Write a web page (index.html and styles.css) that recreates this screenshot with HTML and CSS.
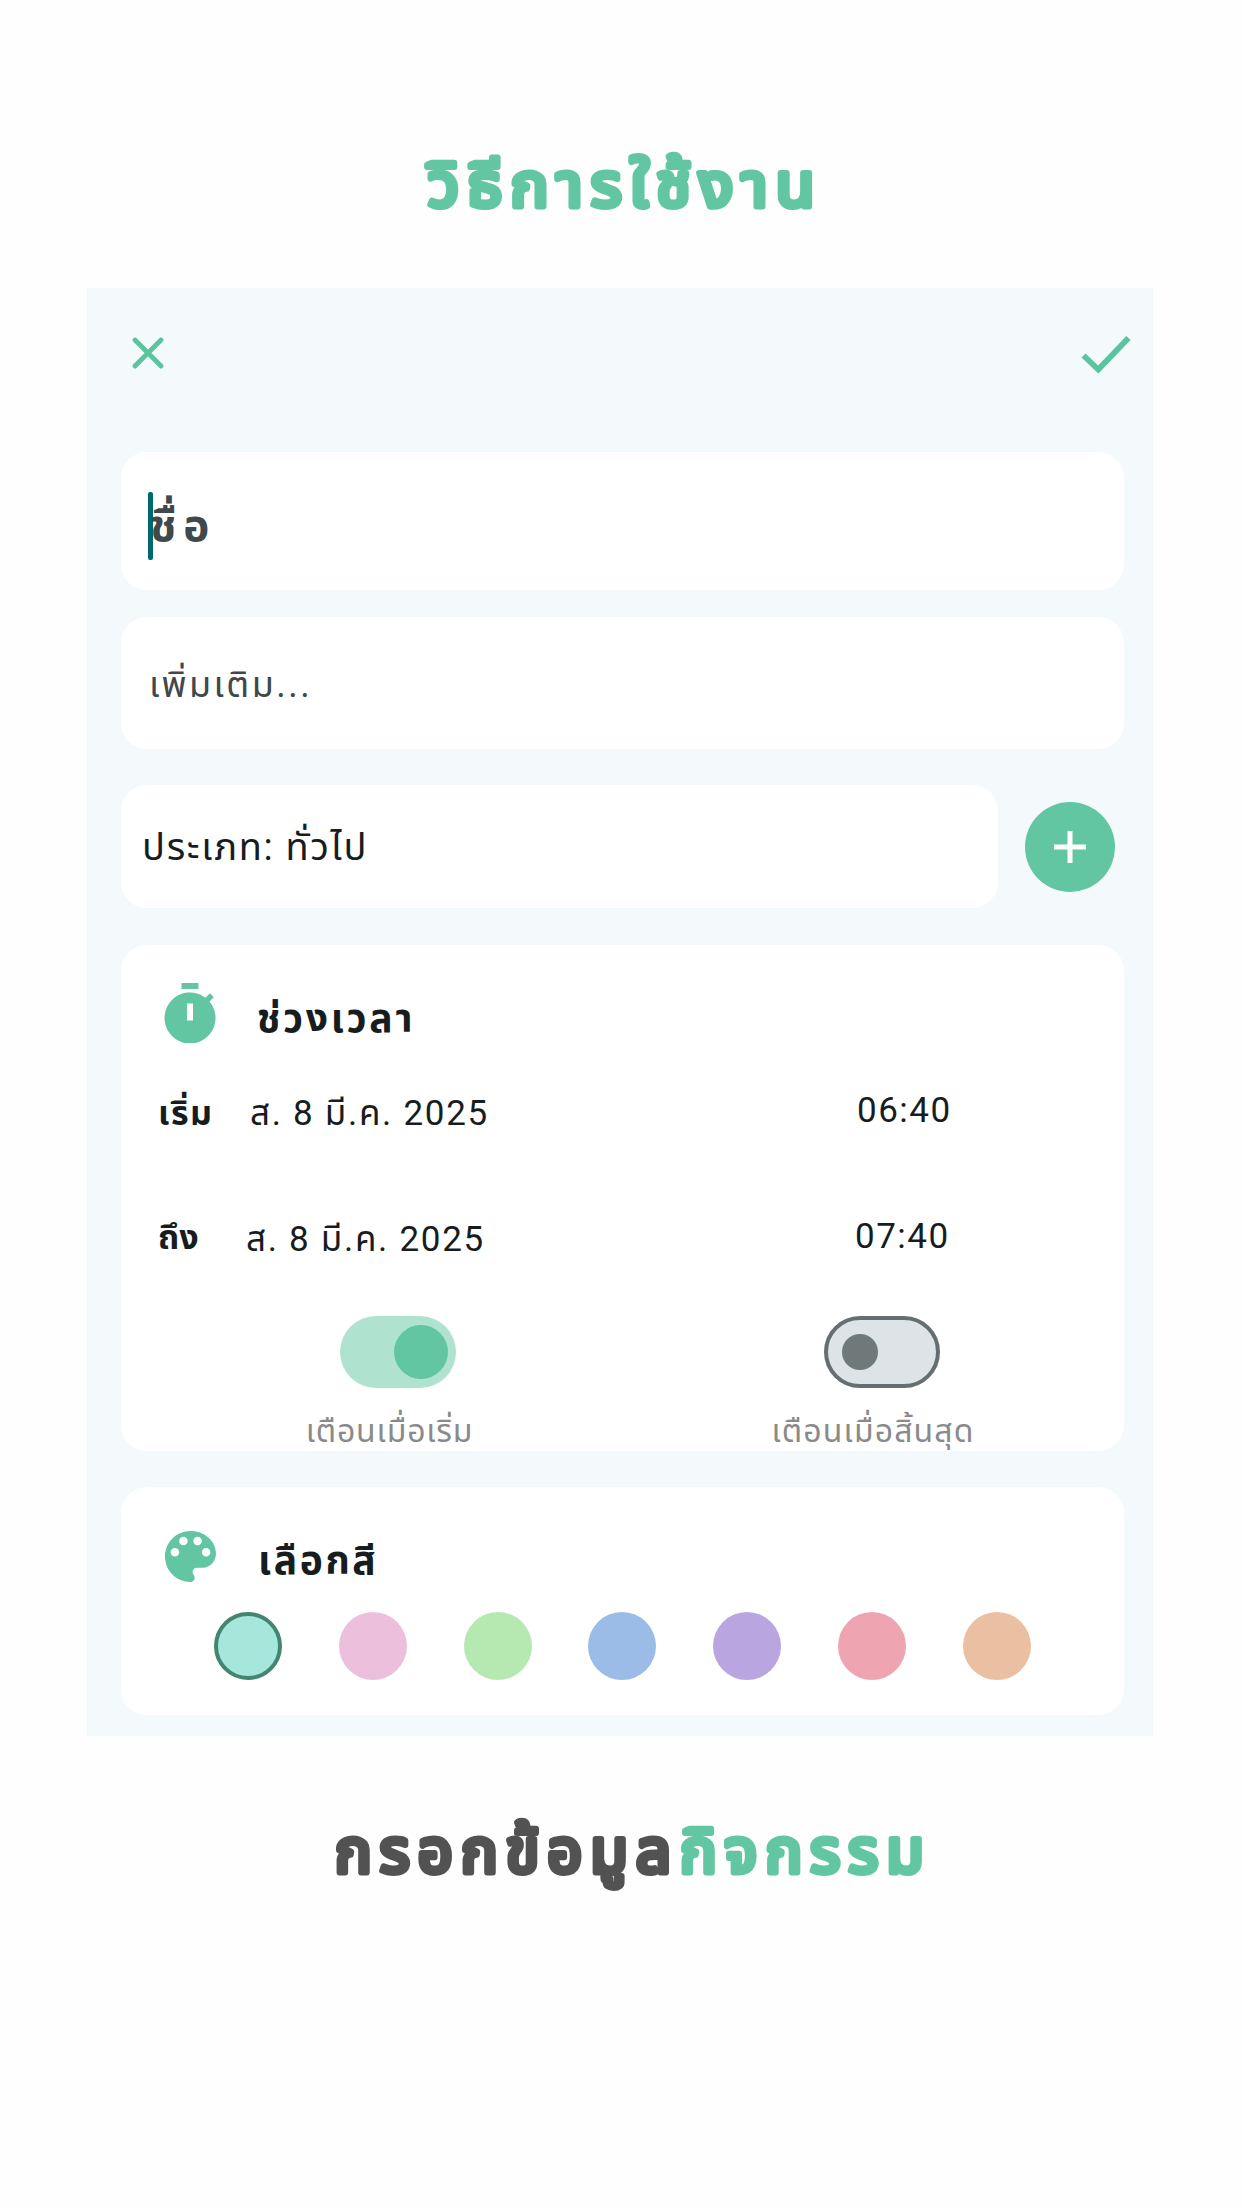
FILE: index.html
```html
<!DOCTYPE html>
<html lang="th">
<head>
<meta charset="utf-8">
<title>วิธีการใช้งาน</title>
<link rel="stylesheet" href="styles.css">
</head>
<body>
<main class="page">
  <h1 class="headline"><svg class="display" viewBox="0 0 1242 288"><text class="green-text" x="428" y="206" textLength="395" lengthAdjust="spacingAndGlyphs">วิธีการใช้งาน</text></svg></h1>

  <section class="panel">
    <header class="toolbar">
      <svg class="icon-close" viewBox="0 0 32 32"><path d="M3 3 29 29M29 3 3 29"/></svg>
      <svg class="icon-check" viewBox="0 0 50 38"><path d="M2.5 20.500 17.300 34.500 47.500 3"/></svg>
    </header>

    <div class="card field field-name"><span class="caret"></span><span class="t name-text">ชื่อ</span></div>
    <div class="card field field-more"><span class="t more-text">เพิ่มเติม...</span></div>

    <div class="type-row">
      <div class="card field field-type"><span class="t type-text">ประเภท: ทั่วไป</span></div>
      <button class="add" aria-label="เพิ่ม">
        <svg viewBox="0 0 32 32"><path d="M16 0V32M0 16H32"/></svg>
      </button>
    </div>

    <div class="card time-card">
      <div class="card-head time-head">
        <svg class="icon-timer" viewBox="0 0 52 60">
          <path d="M17.500 0h17v6h-17z"/>
          <path fill-rule="evenodd" d="M41.500 14.700 46 10.300 49.800 14.300 45.500 18.500A25.500 25.500 0 1 1 41.500 14.700ZM23 20.500V37.500H29V20.500Z"/>
        </svg>
        <h2 class="t time-title">ช่วงเวลา</h2>
      </div>
      <div class="time-row row-start">
        <span class="t label">เริ่ม</span><span class="t date">ส. 8 มี.ค. 2025</span><span class="t clock">06:40</span>
      </div>
      <div class="time-row row-end">
        <span class="t label">ถึง</span><span class="t date">ส. 8 มี.ค. 2025</span><span class="t clock">07:40</span>
      </div>
      <div class="alerts">
        <div class="alert alert-start"><span class="switch on"></span><span class="t hint">เตือนเมื่อเริ่ม</span></div>
        <div class="alert alert-end"><span class="switch off"></span><span class="t hint">เตือนเมื่อสิ้นสุด</span></div>
      </div>
    </div>

    <div class="card color-card">
      <div class="card-head color-head">
        <svg class="icon-palette" viewBox="3 3 18 18"><path d="M12 3c-4.970 0-9 4.030-9 9s4.030 9 9 9c.83 0 1.500-.67 1.500-1.500 0-.39-.15-.74-.39-1.010-.23-.26-.38-.61-.38-.99 0-.83.67-1.500 1.500-1.500H16c2.760 0 5-2.240 5-5 0-4.420-4.030-8-9-8zm-5.500 9c-.83 0-1.500-.67-1.500-1.500S5.670 9 6.500 9 8 9.670 8 10.500 7.330 12 6.500 12zm3-4C8.670 8 8 7.330 8 6.500S8.670 5 9.500 5s1.500.67 1.500 1.500S10.330 8 9.500 8zm5 0c-.83 0-1.500-.67-1.500-1.500S13.670 5 14.500 5s1.500.67 1.500 1.500S15.330 8 14.500 8zm3 4c-.83 0-1.500-.67-1.500-1.500S16.670 9 17.500 9s1.500.67 1.500 1.500-.67 1.500-1.500 1.500z"/></svg>
        <h2 class="t color-title">เลือกสี</h2>
      </div>
      <div class="swatches">
        <span class="swatch mint selected"></span><span class="swatch pink"></span><span class="swatch green"></span><span class="swatch blue"></span><span class="swatch purple"></span><span class="swatch red"></span><span class="swatch orange"></span>
      </div>
    </div>
  </section>

  <p class="footline"><svg class="display" viewBox="0 0 1242 200"><text class="dark-text" x="335" y="136" textLength="344" lengthAdjust="spacingAndGlyphs">กรอกข้อมูล</text><text class="green-text" x="680" y="136" textLength="252" lengthAdjust="spacingAndGlyphs">กิจกรรม</text></svg></p>
</main>
</body>
</html>
```
FILE: styles.css
```css
* { box-sizing: border-box; }
body { margin: 0; background: #fefefe; color: #171d1e; font-family: Roboto, "Noto Sans", "Noto Sans Thai", sans-serif; }
h1, h2, p { margin: 0; }
.page { width: 1242px; height: 2208px; overflow: hidden; }
.t { white-space: nowrap; line-height: 50px; height: 50px; font-weight: 400; }

.headline { height: 288px; }
.display { display: block; width: 100%; height: 100%; font-size: 60px; font-weight: 400; letter-spacing: 8px; stroke-width: 6px; stroke-linejoin: round; }
.green-text { fill: #62c6a2; stroke: #62c6a2; }
.dark-text { fill: #525252; stroke: #525252; }

.panel { width: 1066px; height: 1448px; margin-left: 87px; padding: 0 29px 0 34px; background: #f4fafc; }
.toolbar { height: 164px; display: flex; justify-content: space-between; align-items: flex-start; padding: 0 0 0 11px; margin-right: -7px; }
.toolbar svg { fill: none; stroke: #5ac49e; }
.icon-close { width: 32px; height: 32px; margin-top: 49px; stroke-width: 4.800; stroke-linecap: round; }
.icon-check { width: 50px; height: 38px; margin-top: 47px; stroke-width: 5.800; }

.card { background: #fff; border-radius: 26px; }
.field { display: flex; align-items: flex-start; }
.field-name { height: 138px; padding: 40px 0 0 27px; }
.caret { width: 5px; height: 68px; border-radius: 2px; background: #00696f; }
.name-text { font-size: 44px; font-weight: 700; color: #3f484a; margin: 9px 0 0 -3px; letter-spacing: 7px; }
.field-more { height: 132px; margin-top: 27px; padding: 43px 0 0 28px; }
.more-text { font-size: 36px; color: #3f484a; letter-spacing: 2.500px; }

.type-row { display: flex; align-items: center; justify-content: space-between; margin-top: 36px; padding-right: 9px; }
.field-type { width: 877px; height: 123px; padding: 37px 0 0 21px; }
.type-text { font-size: 38px; letter-spacing: 1.650px; }
.add { width: 90px; height: 90px; padding: 0; border: 0; border-radius: 50%; background: #62c6a2; display: flex; align-items: center; justify-content: center; }
.add svg { width: 32px; height: 32px; fill: none; stroke: #fff; stroke-width: 5; }

.time-card { height: 506px; margin-top: 37px; padding: 38px 0 0 37px; overflow: hidden; }
.card-head { display: flex; align-items: flex-start; }
.time-head { height: 100px; padding-left: 6px; }
.icon-timer { width: 52px; height: 60px; fill: #62c6a2; }
.time-title { font-size: 39px; font-weight: 700; margin: 11px 0 0 41px; letter-spacing: 2.700px; }
.time-row { height: 126px; display: flex; }
.label { width: 92px; font-size: 34px; font-weight: 700; letter-spacing: 1.500px; }
.date { width: 607px; font-size: 35px; letter-spacing: 1.700px; }
.clock { font-size: 35px; letter-spacing: 1.500px; margin-top: -3px; }
.row-start { padding-top: 6px; }
.row-start .label { margin-top: -1px; }
.row-end { height: 107px; padding-top: 6px; }
.row-end .label { letter-spacing: 0; margin-top: -3px; }
.row-end .date { margin-left: -4px; }
.row-end .clock { margin-left: 2px; }
.alerts { display: flex; }
.alert { display: flex; flex-direction: column; align-items: center; }
.alert-start { width: 163px; margin-left: 150px; }
.alert-end { width: 200px; margin-left: 302px; }
.switch { width: 116px; height: 72px; border-radius: 36px; margin-left: 17px; display: flex; align-items: center; }
.switch::before { content: ""; border-radius: 50%; }
.on { background: #afe3d0; justify-content: flex-end; padding-right: 8px; }
.on::before { width: 54px; height: 54px; background: #62c6a2; }
.off { background: #dde3e6; border: 4px solid #656f71; padding-left: 14px; }
.off::before { width: 36px; height: 36px; background: #6f797a; }
.hint { font-size: 32px; color: #8a8a8a; margin-top: 18px; letter-spacing: .8px; }
.alert-end .hint { letter-spacing: 1.100px; }

.color-card { height: 228px; margin-top: 36px; padding-top: 44px; }
.color-head { height: 81px; padding-left: 44px; }
.icon-palette { width: 51px; height: 51px; fill: #62c6a2; }
.color-title { font-size: 39px; font-weight: 700; margin: 5px 0 0 42px; letter-spacing: 2.600px; }
.swatches { display: flex; justify-content: space-between; padding: 0 93px; }
.swatch { width: 68px; height: 68px; border-radius: 50%; }
.mint { background: #a6e7db; }
.selected { border: 4px solid #438570; }
.pink { background: #ecc0dc; }
.green { background: #b6e8b2; }
.blue { background: #9abce6; }
.purple { background: #b9a6e0; }
.red { background: #eea5b1; }
.orange { background: #ebbfa2; }

.footline { height: 200px; }
```
